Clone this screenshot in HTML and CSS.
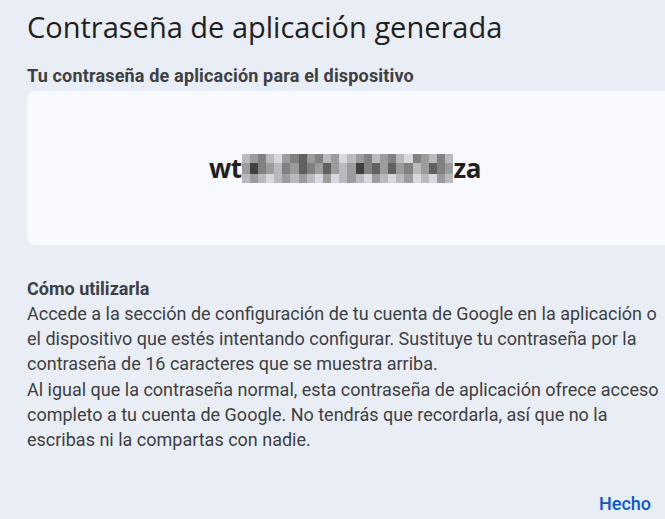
FILE: index.html
```html
<!DOCTYPE html>
<html lang="es">
<head>
<meta charset="utf-8">
<link rel="stylesheet" href="styles.css">
</head>
<body>
<div class="dialog">
  <h1 class="title">Contraseña de aplicación generada</h1>
  <h2 class="label">Tu contraseña de aplicación para el dispositivo</h2>
  <div class="card">
    <div class="pw">
      <span class="pw-text">wt</span>
      <div class="mosaic">
        <div class="mrow r1">
          <i class="c5"></i><i class="c4"></i><i class="c3"></i><i class="c5"></i><i class="c6"></i><i class="c4"></i><i class="c3"></i><i class="c2"></i><i class="c4"></i><i class="c3"></i><i class="c5"></i><i class="c4"></i><i class="c6"></i><i class="c5"></i><i class="c4"></i><i class="c3"></i><i class="c5"></i><i class="c4"></i><i class="c3"></i><i class="c5"></i><i class="c6"></i><i class="c3"></i><i class="c4"></i><i class="c5"></i><i class="c3"></i><i class="c5"></i>
        </div>
        <div class="mrow r2">
          <i class="c4"></i><i class="c1"></i><i class="c3"></i><i class="c4"></i><i class="c5"></i><i class="c3"></i><i class="c4"></i><i class="c2"></i><i class="c3"></i><i class="c4"></i><i class="c2"></i><i class="c4"></i><i class="c5"></i><i class="c4"></i><i class="c1"></i><i class="c3"></i><i class="c2"></i><i class="c4"></i><i class="c2"></i><i class="c4"></i><i class="c3"></i><i class="c5"></i><i class="c4"></i><i class="c2"></i><i class="c3"></i><i class="c4"></i>
        </div>
        <div class="mrow r3">
          <i class="c5"></i><i class="c4"></i><i class="c5"></i><i class="c6"></i><i class="c5"></i><i class="c4"></i><i class="c5"></i><i class="c4"></i><i class="c5"></i><i class="c6"></i><i class="c4"></i><i class="c6"></i><i class="c5"></i><i class="c4"></i><i class="c5"></i><i class="c6"></i><i class="c4"></i><i class="c5"></i><i class="c6"></i><i class="c5"></i><i class="c4"></i><i class="c6"></i><i class="c5"></i><i class="c6"></i><i class="c4"></i><i class="c5"></i>
        </div>
      </div>
      <span class="pw-text">za</span>
    </div>
  </div>
  <div class="howto">
    <h3 class="howto-title">Cómo utilizarla</h3>
    <p class="howto-text">Accede a la sección de configuración de tu cuenta de Google en la aplicación o el dispositivo que estés intentando configurar. Sustituye tu contraseña por la contraseña de 16 caracteres que se muestra arriba.</p>
    <p class="howto-text">Al igual que la contraseña normal, esta contraseña de aplicación ofrece acceso completo a tu cuenta de Google. No tendrás que recordarla, así que no la escribas ni la compartas con nadie.</p>
  </div>
  <div class="actions">
    <button class="btn">Hecho</button>
  </div>
</div>
</body>
</html>
```
FILE: styles.css
```css
* { box-sizing: border-box; }
html, body {
  margin: 0;
  padding: 0;
  background: #e9edf6;
  width: 665px;
  height: 519px;
  overflow: hidden;
}
body {
  font-family: Roboto, "Liberation Sans", sans-serif;
  color: #1f1f1f;
}
.dialog {
  padding: 7px 0 0 27px;
  display: flex;
  flex-direction: column;
}
.title {
  margin: 0;
  font-family: "Open Sans", Roboto, sans-serif;
  font-weight: 400;
  font-size: 29px;
  line-height: 40px;
  color: #1f1f1f;
}
.label {
  margin: 18px 0 4px;
  font-size: 18px;
  font-weight: 700;
  line-height: 22px;
  letter-spacing: 0.17px;
  color: #3c4043;
}
.card {
  background: #f7f9fe;
  border-radius: 8px;
  height: 154px;
  margin-right: -8px;
  display: flex;
  align-items: center;
  justify-content: center;
}
.pw {
  display: flex;
  align-items: center;
  margin-left: -10px;
}
.pw-text {
  font-family: "Open Sans", Roboto, sans-serif;
  font-weight: 700;
  font-size: 26px;
  color: #1f1f1f;
  letter-spacing: -0.5px;
}
.mosaic {
  display: flex;
  flex-direction: column;
  width: 212px;
}
.mrow { display: flex; }
.mrow i { display: block; width: 8.15px; }
.r1 i { height: 9px; }
.r2 i { height: 11px; }
.r3 i { height: 9px; }
.c1 { background: #3f4042; }
.c2 { background: #5f6163; }
.c3 { background: #808183; }
.c4 { background: #9b9c9e; }
.c5 { background: #b8babd; }
.c6 { background: #d6dade; }
.howto {
  margin-top: 31px;
  padding-right: 0;
}
.howto-title {
  margin: 0;
  font-size: 18px;
  font-weight: 700;
  line-height: 25px;
  color: #3c4043;
}
.howto-text {
  margin: 0;
  font-size: 18px;
  line-height: 25.2px;
  color: #3c4043;
}
.actions {
  display: flex;
  justify-content: flex-end;
  margin-top: 40px;
  padding-right: 2px;
}
.btn {
  background: none;
  border: 0;
  padding: 0 12px;
  font-family: Roboto, sans-serif;
  font-size: 18px;
  font-weight: 500;
  color: #0b57d0;
  line-height: 24px;
}
```
